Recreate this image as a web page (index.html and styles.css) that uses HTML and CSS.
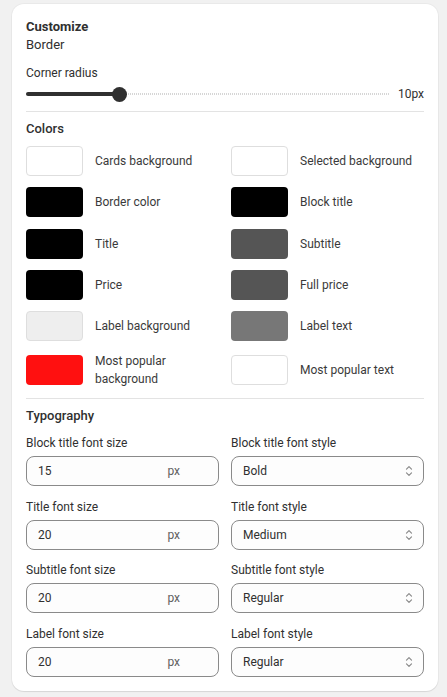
FILE: index.html
```html
<!DOCTYPE html>
<html lang="en">
<head>
    <meta charset="UTF-8">
    <meta name="viewport" content="width=device-width, initial-scale=1.0">
    <title>Customize</title>
    <link rel="stylesheet" href="styles.css">
</head>
<body>
    <div class="card">
        <!-- Border -->
        <h2 class="title">Customize</h2>
        <div class="subtitle">Border</div>
        <div class="field-label radius-label">Corner radius</div>
        <div class="slider">
            <div class="track">
                <div class="fill" style="width: 25.8%"></div>
                <div class="thumb" style="left: 25.8%"></div>
            </div>
            <span class="slider-value">10px</span>
        </div>

        <hr class="divider">

        <!-- Colors -->
        <h3 class="heading">Colors</h3>
        <div class="swatches">
            <div class="swatch-row"><span class="swatch light" style="background:#ffffff"></span><span class="swatch-name">Cards background</span></div>
            <div class="swatch-row"><span class="swatch light" style="background:#ffffff"></span><span class="swatch-name">Selected background</span></div>
            <div class="swatch-row"><span class="swatch" style="background:#000000"></span><span class="swatch-name">Border color</span></div>
            <div class="swatch-row"><span class="swatch" style="background:#000000"></span><span class="swatch-name">Block title</span></div>
            <div class="swatch-row"><span class="swatch" style="background:#000000"></span><span class="swatch-name">Title</span></div>
            <div class="swatch-row"><span class="swatch" style="background:#555555"></span><span class="swatch-name">Subtitle</span></div>
            <div class="swatch-row"><span class="swatch" style="background:#000000"></span><span class="swatch-name">Price</span></div>
            <div class="swatch-row"><span class="swatch" style="background:#555555"></span><span class="swatch-name">Full price</span></div>
            <div class="swatch-row"><span class="swatch light" style="background:#eeeeee"></span><span class="swatch-name">Label background</span></div>
            <div class="swatch-row"><span class="swatch" style="background:#777777"></span><span class="swatch-name">Label text</span></div>
            <div class="swatch-row"><span class="swatch" style="background:#ff1010"></span><span class="swatch-name">Most popular<br>background</span></div>
            <div class="swatch-row"><span class="swatch light" style="background:#ffffff"></span><span class="swatch-name">Most popular text</span></div>
        </div>

        <hr class="divider">

        <!-- Typography -->
        <h3 class="heading">Typography</h3>
        <div class="fields">
            <div class="field">
                <div class="field-label">Block title font size</div>
                <div class="input"><span class="input-value">15</span><span class="suffix">px</span></div>
            </div>
            <div class="field">
                <div class="field-label">Block title font style</div>
                <div class="input select"><span class="input-value">Bold</span>
                    <svg class="chevrons" width="16" height="16" viewBox="0 0 16 16"><path d="M5.5 6.2 8 3.7l2.5 2.5M5.5 9.8 8 12.3l2.5-2.5" fill="none" stroke="#8a8a8a" stroke-width="1.2" stroke-linecap="round" stroke-linejoin="round"/></svg>
                </div>
            </div>
            <div class="field">
                <div class="field-label">Title font size</div>
                <div class="input"><span class="input-value">20</span><span class="suffix">px</span></div>
            </div>
            <div class="field">
                <div class="field-label">Title font style</div>
                <div class="input select"><span class="input-value">Medium</span>
                    <svg class="chevrons" width="16" height="16" viewBox="0 0 16 16"><path d="M5.5 6.2 8 3.7l2.5 2.5M5.5 9.8 8 12.3l2.5-2.5" fill="none" stroke="#8a8a8a" stroke-width="1.2" stroke-linecap="round" stroke-linejoin="round"/></svg>
                </div>
            </div>
            <div class="field">
                <div class="field-label">Subtitle font size</div>
                <div class="input"><span class="input-value">20</span><span class="suffix">px</span></div>
            </div>
            <div class="field">
                <div class="field-label">Subtitle font style</div>
                <div class="input select"><span class="input-value">Regular</span>
                    <svg class="chevrons" width="16" height="16" viewBox="0 0 16 16"><path d="M5.5 6.2 8 3.7l2.5 2.5M5.5 9.8 8 12.3l2.5-2.5" fill="none" stroke="#8a8a8a" stroke-width="1.2" stroke-linecap="round" stroke-linejoin="round"/></svg>
                </div>
            </div>
            <div class="field">
                <div class="field-label">Label font size</div>
                <div class="input"><span class="input-value">20</span><span class="suffix">px</span></div>
            </div>
            <div class="field">
                <div class="field-label">Label font style</div>
                <div class="input select"><span class="input-value">Regular</span>
                    <svg class="chevrons" width="16" height="16" viewBox="0 0 16 16"><path d="M5.5 6.2 8 3.7l2.5 2.5M5.5 9.8 8 12.3l2.5-2.5" fill="none" stroke="#8a8a8a" stroke-width="1.2" stroke-linecap="round" stroke-linejoin="round"/></svg>
                </div>
            </div>
        </div>
    </div>
</body>
</html>
```

FILE: styles.css
```css
body {
    margin: 0;
    padding: 4px 9px 7px 12px;
    background: #f1f1f1;
    font-family: Roboto, "Noto Sans", sans-serif;
    color: #303030;
}
.card {
    background: #fff;
    border-radius: 12px;
    padding: 14px 14px 14px 14px;
    box-shadow: 0 1px 1px rgba(0, 0, 0, 0.08), 0 0 0 1px rgba(0, 0, 0, 0.03);
}
.title {
    margin: 0;
    font-size: 13px;
    line-height: 18px;
    font-weight: 700;
}
.subtitle {
    font-size: 13px;
    line-height: 18px;
}
.field-label {
    font-size: 12px;
    line-height: 16px;
}
.radius-label {
    margin-top: 11px;
}
.slider {
    display: flex;
    align-items: center;
    gap: 8px;
    height: 20px;
    margin-top: 3px;
}
.track {
    flex: 1;
    position: relative;
    height: 2px;
    background: repeating-linear-gradient(to right, #d6d6d6 0 1px, transparent 1px 2px);
}
.fill {
    position: absolute;
    left: 0;
    top: -1px;
    height: 4px;
    border-radius: 2px;
    background: #303030;
}
.thumb {
    position: absolute;
    top: 50%;
    width: 15px;
    height: 15px;
    margin: -7.5px 0 0 -7.5px;
    border-radius: 50%;
    background: #303030;
}
.slider-value {
    font-size: 12px;
}
.divider {
    border: none;
    border-top: 1px solid #e3e3e3;
    margin: 7px 0 8px 0;
}
.heading {
    margin: 0 0 8px 0;
    font-size: 13px;
    line-height: 18px;
    font-weight: 500;
}
.swatches {
    display: grid;
    grid-template-columns: 1fr 1fr;
    column-gap: 12px;
    row-gap: 11.25px;
}
.swatch-row {
    display: flex;
    align-items: center;
    gap: 12px;
    min-height: 30px;
}
.swatch {
    flex: none;
    width: 57px;
    height: 30px;
    border-radius: 4px;
    box-sizing: border-box;
}
.swatch.light {
    border: 1px solid #dedede;
}
.swatch-name {
    font-size: 12px;
    line-height: 18px;
    color: #3a3a3a;
}
.swatches + .divider {
    margin-top: 10px;
}
.heading + .fields {
    margin-top: 10px;
}
.fields {
    display: grid;
    grid-template-columns: 1fr 1fr;
    column-gap: 12px;
    row-gap: 12.5px;
}
.field .field-label {
    margin-bottom: 5px;
}
.input {
    display: flex;
    align-items: center;
    height: 30px;
    box-sizing: border-box;
    padding: 0 0 0 11px;
    border: 1px solid #8a8a8a;
    border-radius: 8px;
    background: #fdfdfd;
    font-size: 12px;
}
.input-value {
    flex: 1;
}
.suffix {
    color: #616161;
    margin-right: 38px;
}
.chevrons {
    margin-right: 6px;
}
```
